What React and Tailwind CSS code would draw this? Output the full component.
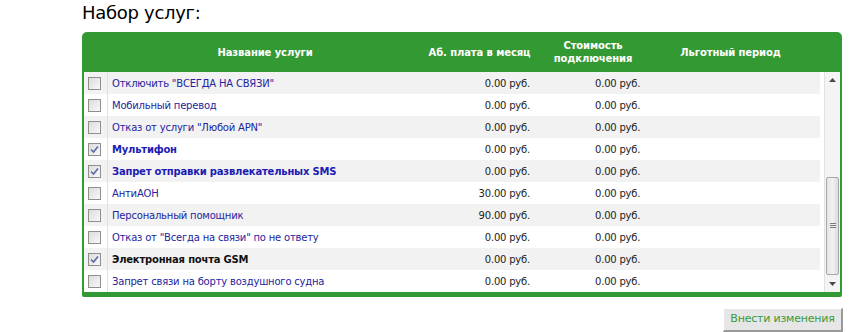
import React from "react";

const services = [
  { name: 'Отключить "ВСЕГДА НА СВЯЗИ"', fee: "0.00 руб.", cost: "0.00 руб.", checked: false },
  { name: "Мобильный перевод", fee: "0.00 руб.", cost: "0.00 руб.", checked: false },
  { name: 'Отказ от услуги "Любой APN"', fee: "0.00 руб.", cost: "0.00 руб.", checked: false },
  { name: "Мультифон", fee: "0.00 руб.", cost: "0.00 руб.", checked: true, style: "blue" },
  { name: "Запрет отправки развлекательных SMS", fee: "0.00 руб.", cost: "0.00 руб.", checked: true, style: "blue" },
  { name: "АнтиАОН", fee: "30.00 руб.", cost: "0.00 руб.", checked: false },
  { name: "Персональный помощник", fee: "90.00 руб.", cost: "0.00 руб.", checked: false },
  { name: 'Отказ от "Всегда на связи" по не ответу', fee: "0.00 руб.", cost: "0.00 руб.", checked: false },
  { name: "Электронная почта GSM", fee: "0.00 руб.", cost: "0.00 руб.", checked: true, style: "black" },
  { name: "Запрет связи на борту воздушного судна", fee: "0.00 руб.", cost: "0.00 руб.", checked: false },
];

const Checkbox = ({ checked }) => (
  <div className="w-[13px] h-[13px] border border-[#8f8f8f] bg-gradient-to-br from-[#dcdcdc] to-[#f8f8f8] flex items-center justify-center">
    {checked && (
      <svg width="9" height="9" viewBox="0 0 9 9">
        <path d="M1 4.5 L3.5 7 L8 1.5" fill="none" stroke="#5a6aa8" strokeWidth="1.6" />
      </svg>
    )}
  </div>
);

const Scrollbar = () => (
  <div className="w-[16px] h-full bg-[#f4f4f4] border-l border-[#e2e2e2] flex flex-col items-center">
    <div className="h-[17px] w-full flex items-center justify-center">
      <svg width="7" height="4" viewBox="0 0 7 4">
        <path d="M0 4 L3.5 0 L7 4 Z" fill="#4a4a4a" />
      </svg>
    </div>
    <div className="flex-1 w-full pt-[88px] pb-[1px] px-[1px] flex flex-col">
      <div className="h-[98px] w-full rounded-[2px] border border-[#a8a8a8] bg-gradient-to-r from-[#e4e4e4] via-[#f2f2f2] to-[#dcdcdc] flex flex-col items-center justify-center gap-[1px]">
        <div className="w-[6px] h-px bg-[#7a7a7a]" />
        <div className="w-[6px] h-px bg-[#7a7a7a]" />
        <div className="w-[6px] h-px bg-[#7a7a7a]" />
      </div>
    </div>
    <div className="h-[17px] w-full flex items-center justify-center">
      <svg width="7" height="4" viewBox="0 0 7 4">
        <path d="M0 0 L3.5 4 L7 0 Z" fill="#4a4a4a" />
      </svg>
    </div>
  </div>
);

export default function App() {
  return (
    <div className="w-[856px] h-[332px] bg-white overflow-hidden font-['DejaVu_Sans',sans-serif]">
      <div className="pl-[82px] h-[32px] pt-[1px] text-[18px] leading-[24px] tracking-[-0.3px] text-black">
        Набор услуг:
      </div>

      <div className="ml-[82px] w-[760px] bg-[#339933] rounded-t-[5px] rounded-b-[2px] px-[2px] pb-[5px]">
        {/* Header */}
        <div className="h-[40px] flex items-center text-white font-bold text-[10px] leading-[13px] tracking-[-0.1px]">
          <div className="w-[24px]" />
          <div className="w-[314px] text-center">Название услуги</div>
          <div className="w-[115px] text-center">Аб. плата в месяц</div>
          <div className="w-[112px] text-center">Стоимость<br />подключения</div>
          <div className="w-[163px] text-center">Льготный период</div>
        </div>

        {/* Rows */}
        <div className="h-[220px] bg-white flex">
          <div className="w-[736px]">
            {services.map((s, i) => (
              <div
                key={i}
                className={`h-[22px] flex items-center text-[10px] tracking-[-0.2px] ${i % 2 === 0 ? "bg-[#f2f2f2]" : "bg-white"}`}
              >
                <div className="w-[24px] h-full flex items-center pl-[4px] border-r border-[#e0e0e0]">
                  <Checkbox checked={s.checked} />
                </div>
                <div
                  className={`w-[314px] pl-[4px] whitespace-nowrap ${
                    s.style === "blue"
                      ? "font-bold text-[#1c1cb4]"
                      : s.style === "black"
                        ? "font-bold text-[#111]"
                        : "text-[#2424a0]"
                  }`}
                >
                  {s.name}
                </div>
                <div className="w-[115px] text-right pr-[7px] text-[#222]">{s.fee}</div>
                <div className="w-[112px] pl-[58px] whitespace-nowrap text-[#222]">{s.cost}</div>
                <div className="flex-1" />
              </div>
            ))}
          </div>
          <div className="w-[4px]" />
          <Scrollbar />
        </div>
      </div>

      <div className="flex justify-end pr-[13px] mt-[11px]">
        <button className="h-[24px] w-[120px] whitespace-nowrap bg-[#e6e6e6] border-t border-l border-white border-r-2 border-b-2 border-r-[#9a9a9a] border-b-[#9a9a9a] text-[11px] tracking-[-0.2px] text-[#3a9a3a]">
          Внести изменения
        </button>
      </div>
    </div>
  );
}
